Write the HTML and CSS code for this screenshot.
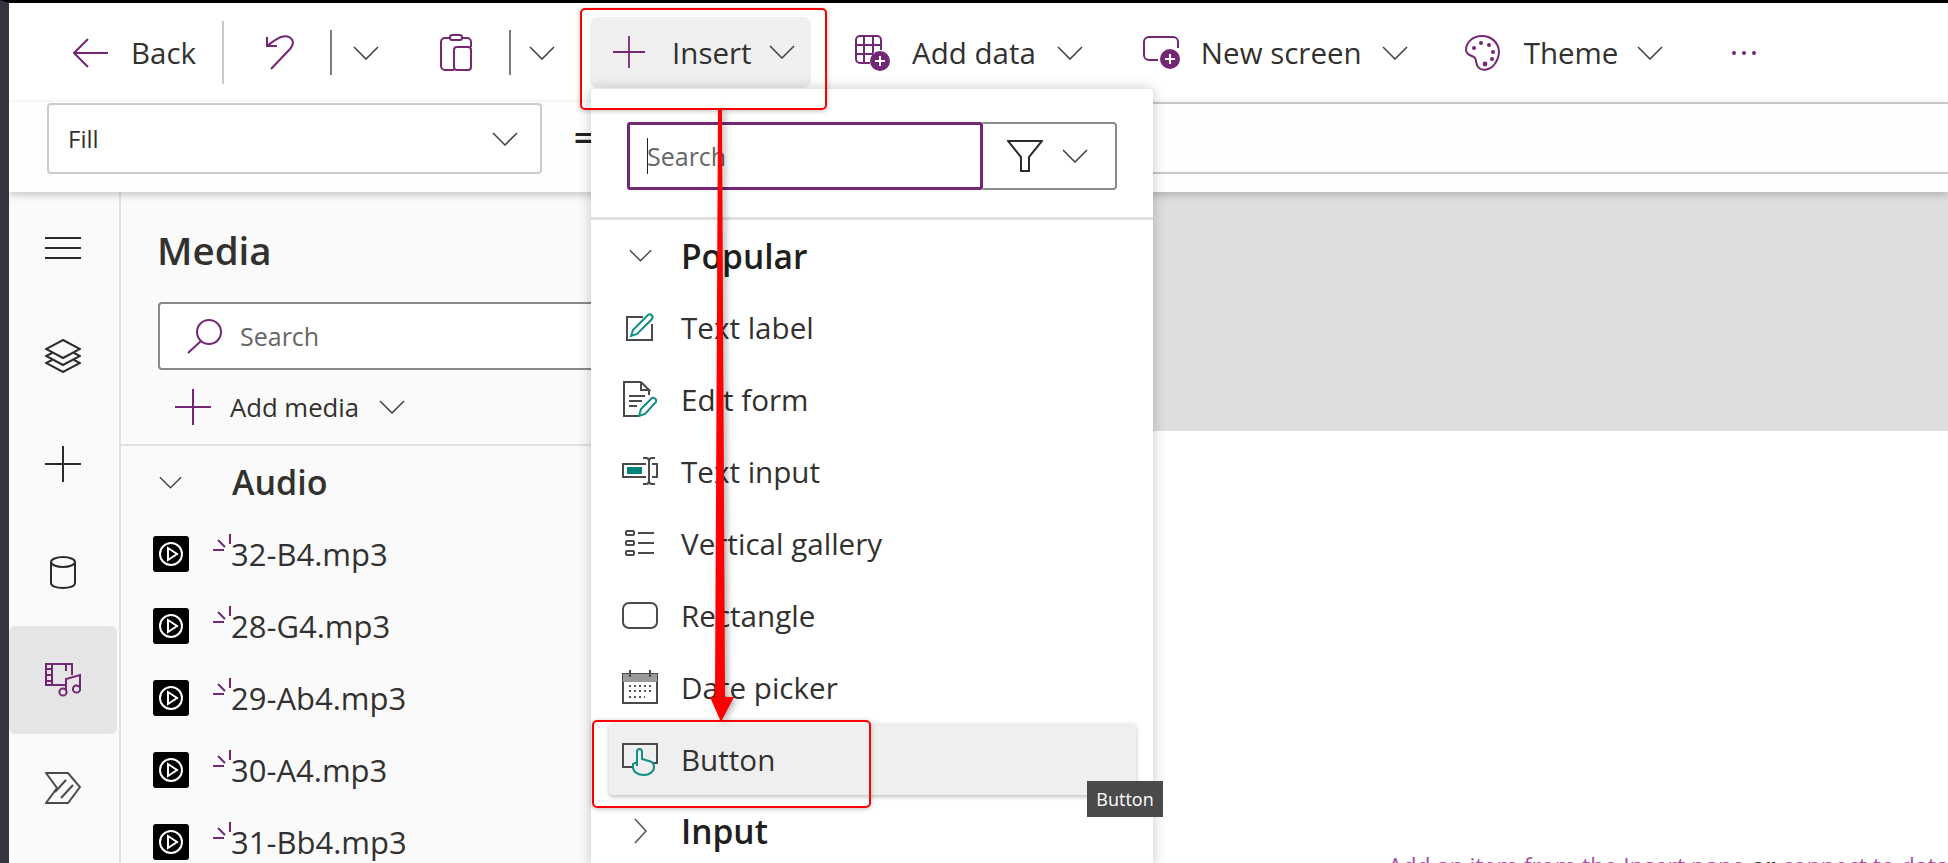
FILE: index.html
```html
<!DOCTYPE html>
<html lang="en">
<head>
	<meta charset="UTF-8">
	<title>Insert button</title>
	<link rel="stylesheet" href="styles.css">
</head>
<body>
<svg class="sprite" width="0" height="0">
	<symbol id="chev" viewBox="0 0 26 14"><path d="M1 1 L13 13 L25 1" fill="none" stroke="currentColor" stroke-width="1.6"/></symbol>
	<symbol id="plus" viewBox="0 0 36 36"><path d="M18 0 V36 M0 18 H36" fill="none" stroke="currentColor" stroke-width="2"/></symbol>
</svg>
<div class="app">
	<!-- top command bar -->
	<div class="toolbar">
		<div class="tool tool-back">
			<svg width="35" height="30" viewBox="0 0 35 30"><path d="M15 1 L1 15 L15 29 M1 15 H35" class="ln-purple"/></svg>
			<span>Back</span>
		</div>
		<i class="sep sep-tall"></i>
		<svg class="undo" width="30" height="35" viewBox="0 0 30 35"><path d="M6 34 L25 14 C32 6 25 -1 16 2 C11 4 7 7 2 11 M2 2 V11 H12" class="ln-purple"/></svg>
		<i class="sep"></i>
		<svg class="chev chev-a"><use href="#chev"/></svg>
		<svg class="clip" width="32" height="37" viewBox="0 0 32 37"><path d="M11 4 H5 a4 4 0 0 0 -4 4 V32 a4 4 0 0 0 4 4 H14 M21 4 H27 a4 4 0 0 1 4 4 V13" class="ln-purple"/><rect x="10" y="1" width="12" height="5" rx="2" class="ln-purple"/><rect x="14" y="13" width="17" height="23" rx="3" class="ln-purple"/></svg>
		<i class="sep"></i>
		<svg class="chev chev-b"><use href="#chev"/></svg>
		<div class="tool tool-insert">
			<svg class="ic-plus" width="32" height="32"><use href="#plus"/></svg>
			<span>Insert</span>
			<svg class="chev"><use href="#chev"/></svg>
		</div>
		<div class="tool tool-data">
			<svg width="35" height="36" viewBox="0 0 35 36"><path d="M15 28 H5 a4 4 0 0 1 -4 -4 V5 a4 4 0 0 1 4 -4 H22 a4 4 0 0 1 4 4 V15 M1 10 H26 M1 19 H18 M9 1 V28 M18 1 V18" class="ln-purple"/><circle cx="25" cy="26" r="10" fill="#742774"/><path d="M25 21 V31 M20 26 H30" stroke="#fff" stroke-width="2"/></svg>
			<span>Add data</span>
			<svg class="chev"><use href="#chev"/></svg>
		</div>
		<div class="tool tool-screen">
			<svg width="37" height="33" viewBox="0 0 37 33"><path d="M15 24 H6 a5 5 0 0 1 -5 -5 V6 a5 5 0 0 1 5 -5 H30 a5 5 0 0 1 5 5 V12" class="ln-purple"/><circle cx="27" cy="23" r="10" fill="#742774"/><path d="M27 18 V28 M22 23 H32" stroke="#fff" stroke-width="2"/></svg>
			<span>New screen</span>
			<svg class="chev"><use href="#chev"/></svg>
		</div>
		<div class="tool tool-theme">
			<svg width="35" height="36" viewBox="0 0 35 36"><path d="M17 1 C7 1 1 8 1 15 C1 21 8 20 10 23 C12 26 10 30 14 33 C18 36 25 35 29 30 C33 25 34 20 34 16 C33 7 26 1 17 1 Z" class="ln-purple"/><circle cx="9" cy="13" r="2" fill="#742774"/><circle cx="16" cy="8" r="2" fill="#742774"/><circle cx="24" cy="10" r="2" fill="#742774"/><circle cx="28" cy="17" r="2" fill="#742774"/><circle cx="27" cy="24" r="2" fill="#742774"/><circle cx="20" cy="29" r="2.4" fill="#742774"/></svg>
			<span>Theme</span>
			<svg class="chev"><use href="#chev"/></svg>
		</div>
		<div class="more"><b></b><b></b><b></b></div>
	</div>

	<!-- property + formula -->
	<div class="formula">
		<div class="prop"><span>Fill</span><svg class="chev"><use href="#chev"/></svg></div>
		<div class="equals">=</div>
		<div class="fx"></div>
	</div>

	<div class="work">
		<div class="rail">
			<div class="rail-item">
				<svg width="36" height="22" viewBox="0 0 36 22"><path d="M0 1 H36 M0 11 H36 M0 21 H36" class="ln-dark"/></svg>
			</div>
			<div class="rail-item">
				<svg width="36" height="34" viewBox="0 0 36 34"><path d="M18 1 L35 10 L18 19 L1 10 Z M7 14 L1 17 L18 26 L35 17 L29 14 M7 21 L1 24 L18 33 L35 24 L29 21" class="ln-dark"/></svg>
			</div>
			<div class="rail-item dark-ic">
				<svg width="36" height="36"><use href="#plus"/></svg>
			</div>
			<div class="rail-item">
				<svg width="26" height="33" viewBox="0 0 26 33"><path d="M1 6 V27 C1 30 6 32 13 32 C20 32 25 30 25 27 V6" class="ln-dark"/><ellipse cx="13" cy="6" rx="12" ry="5" class="ln-dark"/></svg>
			</div>
			<div class="rail-item rail-on">
				<svg width="36" height="34" viewBox="0 0 36 34"><path d="M21 22 H1 V1 H27 V12 M7 1 V22 M21 1 V8 M1 6 H7 M1 12 H7 M1 18 H7" class="ln-purple"/><path d="M21 28 V16 L35 12 V25" class="ln-purple"/><circle cx="18" cy="29" r="3.6" class="ln-purple"/><circle cx="31.500" cy="26" r="3.6" class="ln-purple"/></svg>
			</div>
			<div class="rail-item">
				<svg width="36" height="32" viewBox="0 0 36 32"><path d="M1 1 H23 L35 15 L23 31 H1 L12 16 Z M10 20 L21 8 M16 26 L28 13" class="ln-grey"/></svg>
			</div>
		</div>

		<div class="panel">
			<h1 class="panel-title">Media</h1>
			<div class="panel-search">
				<svg width="36" height="36" viewBox="0 0 36 36"><circle cx="22" cy="14" r="12" class="ln-purple"/><path d="M14 23 L1 35" class="ln-purple"/></svg>
				<span>Search</span>
			</div>
			<div class="add-media">
				<svg class="ic-plus" width="36" height="36"><use href="#plus"/></svg>
				<span>Add media</span>
				<svg class="chev"><use href="#chev"/></svg>
			</div>
			<div class="audio-head">
				<svg class="chev"><use href="#chev"/></svg>
				<span>Audio</span>
			</div>
			<div class="track">
				<svg class="tile" width="36" height="36" viewBox="0 0 36 36"><rect width="36" height="36" rx="3"/><circle cx="18" cy="18" r="11" class="ln-white"/><path d="M15 12 L24 18 L15 24 Z" class="ln-white"/></svg>
				<svg class="spark" width="20" height="20" viewBox="0 0 20 20"><path d="M1 17 H12 M6 7 L13 14 M18 1 V11" class="ln-purple"/></svg>
				<span>32-B4.mp3</span>
			</div>
			<div class="track">
				<svg class="tile" width="36" height="36" viewBox="0 0 36 36"><rect width="36" height="36" rx="3"/><circle cx="18" cy="18" r="11" class="ln-white"/><path d="M15 12 L24 18 L15 24 Z" class="ln-white"/></svg>
				<svg class="spark" width="20" height="20" viewBox="0 0 20 20"><path d="M1 17 H12 M6 7 L13 14 M18 1 V11" class="ln-purple"/></svg>
				<span>28-G4.mp3</span>
			</div>
			<div class="track">
				<svg class="tile" width="36" height="36" viewBox="0 0 36 36"><rect width="36" height="36" rx="3"/><circle cx="18" cy="18" r="11" class="ln-white"/><path d="M15 12 L24 18 L15 24 Z" class="ln-white"/></svg>
				<svg class="spark" width="20" height="20" viewBox="0 0 20 20"><path d="M1 17 H12 M6 7 L13 14 M18 1 V11" class="ln-purple"/></svg>
				<span>29-Ab4.mp3</span>
			</div>
			<div class="track">
				<svg class="tile" width="36" height="36" viewBox="0 0 36 36"><rect width="36" height="36" rx="3"/><circle cx="18" cy="18" r="11" class="ln-white"/><path d="M15 12 L24 18 L15 24 Z" class="ln-white"/></svg>
				<svg class="spark" width="20" height="20" viewBox="0 0 20 20"><path d="M1 17 H12 M6 7 L13 14 M18 1 V11" class="ln-purple"/></svg>
				<span>30-A4.mp3</span>
			</div>
			<div class="track">
				<svg class="tile" width="36" height="36" viewBox="0 0 36 36"><rect width="36" height="36" rx="3"/><circle cx="18" cy="18" r="11" class="ln-white"/><path d="M15 12 L24 18 L15 24 Z" class="ln-white"/></svg>
				<svg class="spark" width="20" height="20" viewBox="0 0 20 20"><path d="M1 17 H12 M6 7 L13 14 M18 1 V11" class="ln-purple"/></svg>
				<span>31-Bb4.mp3</span>
			</div>
		</div>

		<div class="canvas">
			<div class="canvas-head"></div>
			<div class="canvas-body">
				<p class="hint"><a>Add an item from the Insert pane</a> <b>or</b> <a>connect to data</a></p>
			</div>
		</div>
	</div>

	<!-- insert dropdown -->
	<div class="menu">
		<div class="menu-search">
			<div class="menu-input"><i class="caret"></i><span>Search</span></div>
			<div class="menu-filter">
				<svg width="36" height="32" viewBox="0 0 36 32"><path d="M1 1 H35 L22 17 V31 H14 V17 Z" class="ln-dark"/></svg>
				<svg class="chev"><use href="#chev"/></svg>
			</div>
		</div>
		<div class="group group-first">
			<div class="group-ic"><svg class="chev"><use href="#chev"/></svg></div>
			<span>Popular</span>
		</div>
		<div class="item">
			<div class="item-ic"><svg width="30" height="30" viewBox="0 0 30 30"><path d="M18 5 H2 V28 H27 V12" class="ln-grey"/><path d="M6 24 L8 18 L23 3 C25 1 29 4 27 7 L12 22 Z" class="ln-teal"/></svg></div>
			<span>Text label</span>
		</div>
		<div class="item">
			<div class="item-ic"><svg width="34" height="36" viewBox="0 0 34 36"><path d="M18 1 H1 V35 H15 M18 1 V9 H26 L18 1 M26 9 V14 M6 15 H22 M6 20 H19 M6 25 H14" class="ln-grey"/><path d="M16 35 L18 28 L28 18 C30 15 34 18 33 21 L22 33 Z" class="ln-teal"/></svg></div>
			<span>Edit form</span>
		</div>
		<div class="item">
			<div class="item-ic"><svg width="36" height="28" viewBox="0 0 36 28"><path d="M24 7 H1 V20 H24 M30 7 H35 V20 H30" class="ln-grey"/><rect x="5" y="10" width="15" height="7" fill="#00847c"/><path d="M21 1 H24 C26 1 27 2 27 4 V24 C27 26 26 27 24 27 H21 M33 1 H30 C28 1 27 2 27 4 M27 24 C27 26 28 27 30 27 H33" class="ln-grey"/></svg></div>
			<span>Text input</span>
		</div>
		<div class="item">
			<div class="item-ic"><svg width="30" height="26" viewBox="0 0 30 26"><rect x="1" y="1" width="8" height="4" rx="1" class="ln-grey"/><rect x="1" y="11" width="8" height="4" rx="1" class="ln-grey"/><rect x="1" y="21" width="8" height="4" rx="1" class="ln-grey"/><path d="M13 3 H29 M13 13 H29 M13 23 H29" class="ln-grey"/></svg></div>
			<span>Vertical gallery</span>
		</div>
		<div class="item">
			<div class="item-ic"><svg width="36" height="27" viewBox="0 0 36 27"><rect x="1" y="1" width="34" height="25" rx="6" class="ln-grey"/></svg></div>
			<span>Rectangle</span>
		</div>
		<div class="item">
			<div class="item-ic"><svg width="36" height="34" viewBox="0 0 36 34"><rect x="1" y="4" width="34" height="29" class="ln-grey"/><rect x="1" y="4" width="34" height="8" fill="#9a9a9a"/><path d="M8 0 V7 M28 0 V7" class="ln-grey"/><path d="M7 16 H29 M7 21 H29 M7 27 H23" fill="none" stroke="#555" stroke-width="2" stroke-dasharray="2 3"/></svg></div>
			<span>Date picker</span>
		</div>
		<div class="item item-on">
			<div class="item-ic"><svg width="36" height="34" viewBox="0 0 36 34"><path d="M11 25 H1 V2 H35 V21 H30" class="ln-grey"/><path d="M15 24 V10 C15 6 20 6 20 10 V17 L27 19 C31 20 32 22 32 25 C32 30 27 33 22 33 C16 33 11 30 11 25 V22 L15 20" class="ln-teal"/></svg></div>
			<span>Button</span>
		</div>
		<div class="group">
			<div class="group-ic"><svg class="side" width="13" height="26" viewBox="0 0 13 26"><path d="M1 1 L12 13 L1 25" fill="none" stroke="#555" stroke-width="1.6"/></svg></div>
			<span>Input</span>
		</div>
	</div>

	<div class="tip">Button</div>

	<!-- annotations on top of the screenshot -->
	<div class="mark mark-insert"></div>
	<div class="mark mark-button"></div>
	<svg class="arrow" width="40" height="620" viewBox="0 0 40 620"><polygon points="18,0 22,0 25,588 34,588 21,613 10,588 15,588" fill="#fe0000"/></svg>
</div>
</body>
</html>
```

FILE: styles.css
```css
*{
	box-sizing: border-box;
}
html,body{
	margin: 0;
	height: 100%;
	overflow: hidden;
}
body{
	font-family: "Open Sans", "Noto Sans", sans-serif;
	color: #323130;
	background: #fff;
}
.sprite{
	position: absolute;
}
.app{
	position: relative;
	width: 1948px;
	height: 863px;
	display: flex;
	flex-direction: column;
	border-top: 3px solid #000;
	border-left: 9px solid #34363b;
	overflow: hidden;
}

/* line styles for the icons */
.ln-purple,.ln-dark,.ln-grey,.ln-teal,.ln-white{
	fill: none;
	stroke-width: 2;
}
.ln-purple{ stroke: #742774; }
.ln-dark{ stroke: #2b2b2b; }
.ln-grey{ stroke: #4a4a4a; }
.ln-teal{ stroke: #0f8f85; }
.ln-white{ stroke: #fff; }
.chev{
	width: 26px;
	height: 14px;
	color: #44474a;
	flex: none;
}
.ic-plus{
	color: #742774;
	flex: none;
}

/* toolbar */
.toolbar{
	height: 99px;
	display: flex;
	align-items: center;
	padding-left: 64px;
	font-size: 29.5px;
	background: #fff;
}
.tool{
	display: flex;
	align-items: center;
	white-space: nowrap;
}
.tool-back{
	gap: 23px;
}
.sep{
	width: 2px;
	height: 45px;
	background: #7d7d7d;
	flex: none;
}
.sep-tall{
	height: 63px;
	background: #c8c8c8;
	margin: 0 41px 0 26px;
}
.undo{
	margin-right: 35px;
	flex: none;
}
.chev-a{
	margin: 0 61px 0 21px;
}
.clip{
	margin-right: 37px;
	flex: none;
}
.chev-b{
	margin: 0 35px 0 18px;
}
.tool-insert{
	width: 221px;
	height: 71px;
	margin-top: -1px;
	padding-left: 23px;
	background: #efefef;
	border-radius: 8px;
}
.tool-insert span{
	margin: 0 17px 0 27px;
}
.tool-data{
	margin-left: 44px;
}
.tool-data span{
	margin: 0 21px 0 22px;
}
.tool-screen{
	margin-left: 60px;
}
.tool-screen span{
	margin: 0 20px 0 21px;
}
.tool-theme{
	margin-left: 57px;
}
.tool-theme span{
	margin: 0 19px 0 24px;
}
.more{
	display: flex;
	gap: 6px;
	margin-left: 69px;
	margin-top: 1px;
}
.more b{
	width: 4px;
	height: 4px;
	border-radius: 50%;
	background: #742774;
}

/* property + formula row */
.formula{
	height: 90px;
	display: flex;
	align-items: flex-start;
	padding-left: 38px;
	background: #fefefe;
	box-shadow: 0 3px 8px rgba(0,0,0,.2);
	position: relative;
	z-index: 1;
}
.prop{
	width: 495px;
	height: 71px;
	margin-top: 1px;
	display: flex;
	align-items: center;
	justify-content: space-between;
	padding: 0 22px 0 19px;
	font-size: 24px;
	border: 2px solid #ccc;
	border-radius: 4px;
	background: #fff;
}
.equals{
	width: 84px;
	height: 71px;
	line-height: 71px;
	text-align: center;
	font-size: 36px;
	font-weight: 600;
	color: #222;
}
.fx{
	flex: 1;
	height: 72px;
	border-top: 2px solid #c8c8c8;
	border-bottom: 2px solid #c8c8c8;
}

/* main area */
.work{
	flex: 1;
	display: flex;
	min-height: 0;
}
.rail{
	width: 112px;
	flex: none;
	padding-top: 2px;
	background: #fafafa;
	border-right: 2px solid #e0e0e0;
}
.rail-item{
	width: 108px;
	height: 108px;
	display: flex;
	align-items: center;
	justify-content: center;
	border-radius: 6px;
}
.dark-ic{
	color: #2b2b2b;
}
.rail-on{
	background: #e5e5e5;
}
.panel{
	width: 470px;
	flex: none;
	background: #fafafa;
	overflow: hidden;
}
.panel-title{
	margin: 33px 0 0 36px;
	font-size: 38.5px;
	line-height: 50px;
	font-weight: 600;
}
.panel-search{
	width: 520px;
	height: 68px;
	margin: 27px 0 0 37px;
	padding-left: 27px;
	display: flex;
	align-items: center;
	gap: 17px;
	font-size: 25px;
	color: #666;
	background: #fff;
	border: 2px solid #8a8a8a;
	border-radius: 4px;
}
.add-media{
	height: 76px;
	display: flex;
	align-items: center;
	padding-left: 54px;
	font-size: 25.700px;
	border-bottom: 2px solid #e0e0e0;
}
.add-media span{
	margin: 0 20px 0 19px;
}
.audio-head{
	height: 72px;
	display: flex;
	align-items: center;
	padding-left: 38px;
	font-size: 34px;
	font-weight: 600;
}
.audio-head span{
	margin-left: 50px;
}
.audio-head .chev{
	width: 23px;
	height: 13px;
}
.track{
	height: 72px;
	display: flex;
	align-items: center;
	padding-left: 32px;
	font-size: 31px;
	font-weight: 500;
}
.tile{
	flex: none;
	margin-right: 23px;
}
.spark{
	flex: none;
	align-self: flex-start;
	margin-top: 15px;
	margin-right: -1px;
}
.canvas{
	flex: 1;
	min-width: 0;
	background: #fff;
}
.canvas-head{
	height: 239px;
	background: #dedede;
}
.canvas-body{
	padding: 420px 0 0 797px;
}
.hint{
	margin: 0;
	font-size: 23px;
	line-height: 30px;
	white-space: nowrap;
	color: #a64fa6;
}
.hint b{
	color: #323130;
}

/* insert menu */
.menu{
	position: absolute;
	left: 582px;
	top: 86px;
	width: 562px;
	height: 780px;
	background: #fff;
	border-radius: 4px;
	box-shadow: 0 0 14px rgba(0,0,0,.22);
	z-index: 2;
}
.menu-search{
	display: flex;
	height: 68px;
	margin: 33px 36px 27px;
}
.menu-input{
	width: 356px;
	display: flex;
	align-items: center;
	padding-left: 17px;
	font-size: 25px;
	color: #666;
	border: 3px solid #742774;
	border-radius: 3px;
}
.caret{
	width: 1px;
	height: 36px;
	margin-right: -1px;
	background: #222;
}
.menu-filter{
	flex: 1;
	display: flex;
	align-items: center;
	gap: 19px;
	padding-left: 24px;
	border: 2px solid #8a8a8a;
	border-left: 0;
	border-radius: 0 4px 4px 0;
}
.group,.item{
	height: 72px;
	display: flex;
	align-items: center;
	margin: 0 17px 0 18px;
	gap: 10px;
	font-size: 29.600px;
	white-space: nowrap;
}
.group{
	font-size: 33.500px;
	font-weight: 600;
	color: #201f1e;
}
.group-first{
	margin: 0;
	padding-left: 18px;
	border-top: 3px solid #e0e0e0;
	height: 74px;
}
.group-ic,.item-ic{
	width: 62px;
	display: flex;
	justify-content: center;
	flex: none;
}
.group-ic .chev{
	width: 23px;
	height: 13px;
}
.item-on{
	background: #efefef;
	border-radius: 4px;
	box-shadow: 0 2px 4px rgba(0,0,0,.25);
}
.tip{
	position: absolute;
	left: 1078px;
	top: 778px;
	width: 76px;
	height: 36px;
	line-height: 36px;
	text-align: center;
	font-size: 18px;
	color: #fff;
	background: #4a4a4a;
	z-index: 3;
}

/* red marks */
.mark{
	position: absolute;
	border: 2px solid #f00;
	border-radius: 5px;
	box-shadow: 0 1px 5px rgba(0,0,0,.25);
	z-index: 4;
}
.mark-insert{
	left: 571px;
	top: 5px;
	width: 247px;
	height: 102px;
}
.mark-button{
	left: 583px;
	top: 717px;
	width: 279px;
	height: 88px;
}
.arrow{
	position: absolute;
	left: 691px;
	top: 106px;
	z-index: 4;
	filter: drop-shadow(3px 1px 3px rgba(0,0,0,.3));
}
```
